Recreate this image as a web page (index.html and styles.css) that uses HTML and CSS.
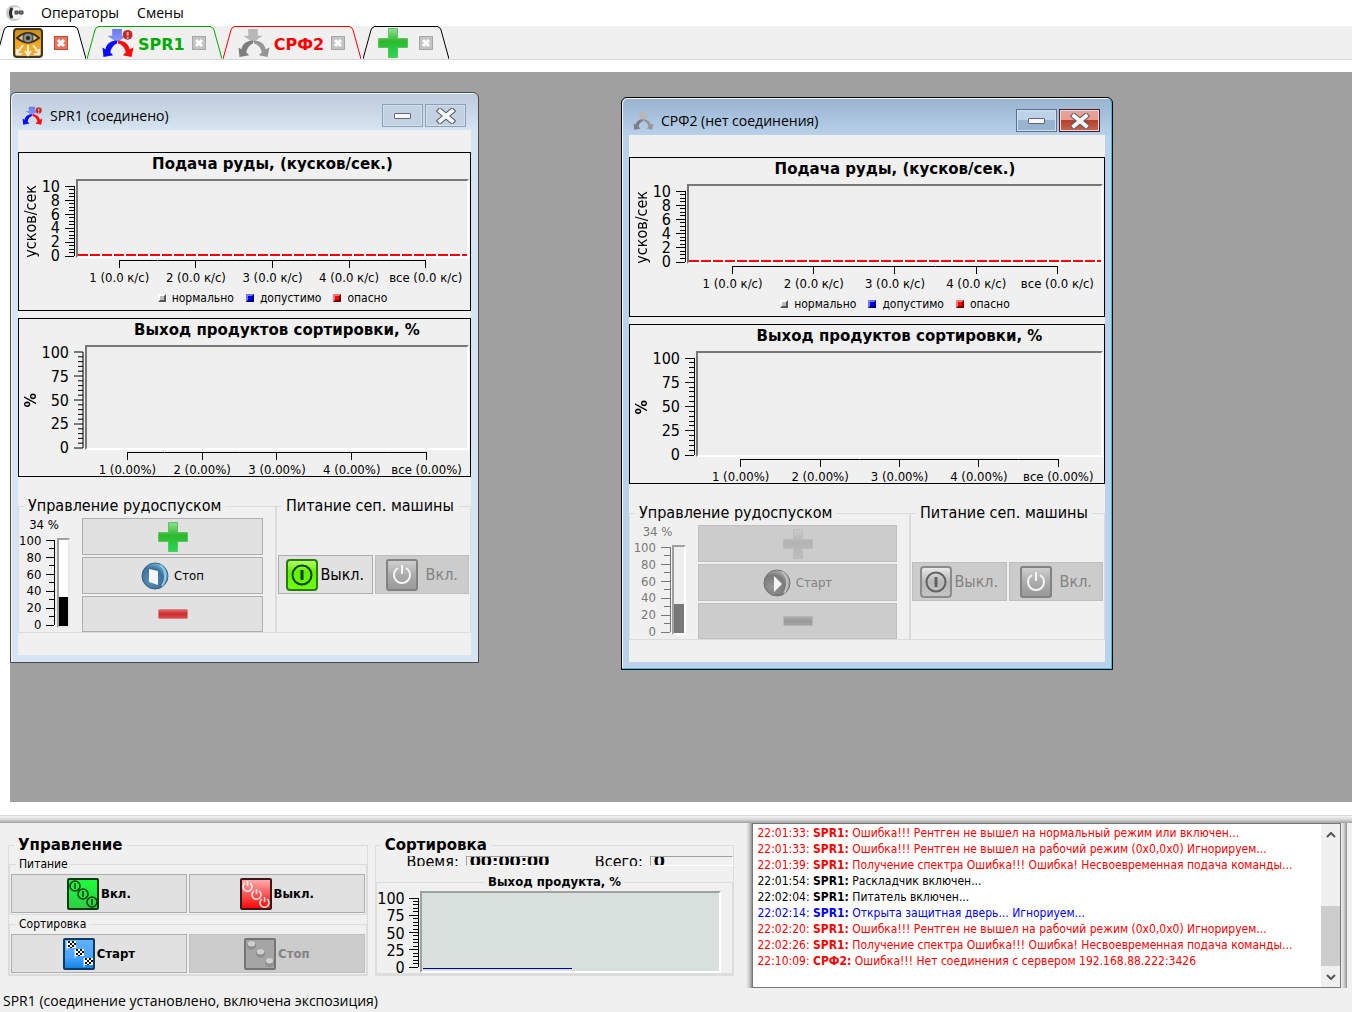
FILE: index.html
```html
<!DOCTYPE html>
<html lang="ru">
<head>
<meta charset="utf-8">
<title>SPR1</title>
<link rel="stylesheet" href="styles.css">
</head>
<body>
<svg class="defs" width="0" height="0" aria-hidden="true">
  <defs>
    <linearGradient id="gGold" x1="0" y1="0" x2="0" y2="1"><stop offset="0" stop-color="#c98a1c"/><stop offset=".5" stop-color="#f0a818"/><stop offset="1" stop-color="#e8b04a"/></linearGradient>
    <linearGradient id="gGreen" x1="0" y1="0" x2="0" y2="1"><stop offset="0" stop-color="#8fe08f"/><stop offset=".45" stop-color="#2db82d"/><stop offset="1" stop-color="#22dd55"/></linearGradient>
    <linearGradient id="gLime" x1="0" y1="0" x2="0" y2="1"><stop offset="0" stop-color="#b8ff70"/><stop offset=".4" stop-color="#60f000"/><stop offset="1" stop-color="#6cff10"/></linearGradient>
    <linearGradient id="gGray" x1="0" y1="0" x2="0" y2="1"><stop offset="0" stop-color="#d4d4d4"/><stop offset=".5" stop-color="#a4a4a4"/><stop offset="1" stop-color="#8c8c8c"/></linearGradient>
    <linearGradient id="gPale" x1="0" y1="0" x2="0" y2="1"><stop offset="0" stop-color="#f4f4f4"/><stop offset=".5" stop-color="#b4b4b4"/><stop offset="1" stop-color="#c4c4c4"/></linearGradient>
    <linearGradient id="gRed" x1="0" y1="0" x2="0" y2="1"><stop offset="0" stop-color="#ffb0b0"/><stop offset="1" stop-color="#ff0000"/></linearGradient>
    <linearGradient id="gBlue" x1="0" y1="0" x2="0" y2="1"><stop offset="0" stop-color="#62b2ff"/><stop offset=".6" stop-color="#4aa4fa"/><stop offset="1" stop-color="#0a84e4"/></linearGradient>
    <linearGradient id="gOn" x1="0" y1="0" x2="0" y2="1"><stop offset="0" stop-color="#1cff3c"/><stop offset="1" stop-color="#30cc44"/></linearGradient>
    <linearGradient id="gMinus" x1="0" y1="0" x2="0" y2="1"><stop offset="0" stop-color="#e07070"/><stop offset=".5" stop-color="#cc2a2a"/><stop offset="1" stop-color="#dd5050"/></linearGradient>
    <radialGradient id="gDisc" cx=".35" cy=".65" r=".75"><stop offset="0" stop-color="#5f93b8"/><stop offset=".6" stop-color="#3d6f98"/><stop offset="1" stop-color="#7fd0f5"/></radialGradient>
    <linearGradient id="gArrow" x1="0" y1="0" x2="0" y2="1"><stop offset="0" stop-color="#6a78f0"/><stop offset="1" stop-color="#8a9cff"/></linearGradient>

    <symbol id="split" viewBox="0 0 34 32">
      <path d="M11 1h10v7h5l-10 7-10-7h5z" fill="url(#gArrow)"/>
      <path d="M16 13C9 13 5 17 4 22L1 20l1 10 10-2-3-3c1-5 4-8 7-9z" fill="#0b0bff"/>
      <path d="M17 13c7 0 11 4 12 9l4-2-2 10-9-2 3-3c-1-5-4-8-8-9z" fill="#ff0b0b"/>
    </symbol>
    <symbol id="split-gray" viewBox="0 0 34 32">
      <path d="M11 1h10v7h5l-10 7-10-7h5z" fill="#b8b8b8"/>
      <path d="M16 13C9 13 5 17 4 22L1 20l1 10 10-2-3-3c1-5 4-8 7-9z" fill="#7e7e7e"/>
      <path d="M17 13c7 0 11 4 12 9l4-2-2 10-9-2 3-3c-1-5-4-8-8-9z" fill="#969696"/>
    </symbol>
    <symbol id="alert" viewBox="0 0 34 32">
      <circle cx="27" cy="7" r="5" fill="#c22a2a"/><path d="M27 4v4M27 9v2" stroke="#f3a0a0" stroke-width="2"/>
    </symbol>
    <symbol id="cross" viewBox="0 0 14 14">
      <path d="M4 4l6 6M10 4l-6 6" stroke="#fff" stroke-width="3"/>
    </symbol>
    <symbol id="plus" viewBox="0 0 30 30">
      <path d="M10.500 .5h9v10h10v9h-10v10h-9v-10H.5v-9h10z" fill="url(#gGreen)" stroke="#5cc45c"/>
    </symbol>
    <symbol id="minus" viewBox="0 0 30 10">
      <rect x=".5" y=".5" width="29" height="9" rx="1" fill="url(#gMinus)" stroke="#d88080"/>
    </symbol>
    <symbol id="disc" viewBox="0 0 28 28">
      <circle cx="14" cy="14" r="13" fill="url(#gDisc)" stroke="#38607f"/>
      <path d="M19 3c6 4 7 14 2 21" fill="none" stroke="#8fc8e6" stroke-width="2"/>
    </symbol>
    <symbol id="on" viewBox="0 0 32 32">
      <rect x="1" y="1" width="30" height="30" rx="3" fill="url(#gLime)" stroke="#2a7a10" stroke-width="2"/>
      <circle cx="16" cy="16" r="9.500" fill="none" stroke="#0b3a00" stroke-width="2"/><path d="M16 11v10" stroke="#0b3a00" stroke-width="3"/>
    </symbol>
    <symbol id="on-gray" viewBox="0 0 32 32">
      <rect x="1" y="1" width="30" height="30" rx="3" fill="url(#gPale)" stroke="#7c7c7c" stroke-width="2"/>
      <circle cx="16" cy="16" r="9.500" fill="none" stroke="#484848" stroke-width="2"/><path d="M16 11v10" stroke="#484848" stroke-width="3"/>
    </symbol>
    <symbol id="off" viewBox="0 0 32 32">
      <rect x="1" y="1" width="30" height="30" rx="2" fill="url(#gGray)" stroke="#707070" stroke-width="2"/>
      <path d="M12 9a8 8 0 1 0 8 0M16 6v9" fill="none" stroke="#fff" stroke-width="2"/>
    </symbol>
    <symbol id="ball" viewBox="0 0 12 12"><circle cx="6" cy="6" r="5" fill="#808080"/><ellipse cx="6" cy="4" rx="4" ry="3" fill="#d0d0d0"/></symbol>
    <symbol id="flag" viewBox="0 0 10 9">
      <path d="M1 0v9" stroke="#d8e8ff"/><rect x="1" width="9" height="7" fill="#fff"/>
      <path d="M2 0h2v2H2zM6 0h2v2H6zM4 2h2v2H4zM8 2h2v2H8zM2 4h2v2H2zM6 4h2v2H6zM4 6h2v1H4z" fill="#111"/>
    </symbol>
    <symbol id="winx" viewBox="0 0 20 16">
      <path d="M4 3l12 10M16 3L4 13" stroke="#525a68" stroke-width="6" stroke-linecap="square"/>
      <path d="M4 3l12 10M16 3L4 13" stroke="#f6f6f6" stroke-width="4" stroke-linecap="square"/>
    </symbol>
  </defs>
</svg>

<nav class="menubar">
  <svg class="app-icon" viewBox="0 0 20 18"><circle cx="9" cy="9" r="8" fill="#c9c9c9"/><circle cx="11" cy="9" r="6" fill="#f6f6f6"/><path d="M7 4q-3 5 0 10" fill="none" stroke="#2a2a2a" stroke-width="3"/><path d="M10 7h3v3h-3zM14 7h4v3h-4z" fill="#777" stroke="#444"/></svg>
  <a href="#operators">Операторы</a>
  <a href="#shifts">Смены</a>
</nav>

<div class="tabs" role="tablist">
  <div class="tab tab-home" role="tab" aria-selected="true">
    <svg class="edge" viewBox="0 0 11 33"><path d="M0 33L8 4Q9 1 11 1V33z"/><path class="line" d="M0 33L8 4Q9 1 11 1"/></svg>
    <div class="face">
      <svg class="tab-icon" viewBox="0 0 30 30"><rect x="1" y="1" width="28" height="28" rx="3" fill="url(#gGold)" stroke="#3d3528" stroke-width="2"/><path d="M4 10Q15 0 26 10Q15 19 4 10z" fill="#e4c98c" stroke="#3a2f1a" stroke-width="2"/><circle cx="15" cy="10" r="5" fill="#8a8a8a" stroke="#333"/><circle cx="15" cy="10" r="2" fill="#222"/><path d="M15 17v9M12 23l3 4 3-4M10 17l-5 7M4 21v5h5M20 17l5 7M26 21v5h-5" fill="none" stroke="#f1ead8" stroke-width="2"/></svg>
      <button class="tab-close hot" aria-label="Закрыть"><svg><use href="#cross"/></svg></button>
    </div>
    <svg class="edge" viewBox="0 0 11 33"><path d="M0 1Q2 1 3 4L11 33H0z"/><path class="line" d="M0 1Q2 1 3 4L11 33"/></svg>
  </div>
  <div class="tab tab-spr" role="tab">
    <svg class="edge" viewBox="0 0 11 33"><path d="M0 33L8 4Q9 1 11 1V33z"/><path class="line" d="M0 33L8 4Q9 1 11 1"/></svg>
    <div class="face">
      <svg class="tab-icon wide" viewBox="0 0 34 32"><use href="#split"/><use href="#alert"/></svg>
      <span>SPR1</span>
      <button class="tab-close" aria-label="Закрыть"><svg><use href="#cross"/></svg></button>
    </div>
    <svg class="edge" viewBox="0 0 11 33"><path d="M0 1Q2 1 3 4L11 33H0z"/><path class="line" d="M0 1Q2 1 3 4L11 33"/></svg>
  </div>
  <div class="tab tab-srf" role="tab">
    <svg class="edge" viewBox="0 0 11 33"><path d="M0 33L8 4Q9 1 11 1V33z"/><path class="line" d="M0 33L8 4Q9 1 11 1"/></svg>
    <div class="face">
      <svg class="tab-icon wide" viewBox="0 0 34 32"><use href="#split-gray"/></svg>
      <span>СРФ2</span>
      <button class="tab-close" aria-label="Закрыть"><svg><use href="#cross"/></svg></button>
    </div>
    <svg class="edge" viewBox="0 0 11 33"><path d="M0 1Q2 1 3 4L11 33H0z"/><path class="line" d="M0 1Q2 1 3 4L11 33"/></svg>
  </div>
  <div class="tab tab-add" role="tab">
    <svg class="edge" viewBox="0 0 11 33"><path d="M0 33L8 4Q9 1 11 1V33z"/><path class="line" d="M0 33L8 4Q9 1 11 1"/></svg>
    <div class="face">
      <svg class="tab-icon"><use href="#plus"/></svg>
      <button class="tab-close" aria-label="Закрыть"><svg><use href="#cross"/></svg></button>
    </div>
    <svg class="edge" viewBox="0 0 11 33"><path d="M0 1Q2 1 3 4L11 33H0z"/><path class="line" d="M0 1Q2 1 3 4L11 33"/></svg>
  </div>
</div>

<main class="desktop">
  <section class="window win-spr">
    <header class="titlebar">
      <svg class="win-icon" viewBox="0 0 34 32"><use href="#split"/><use href="#alert"/></svg>
      <h2>SPR1 (соединено)</h2>
      <button class="win-btn" aria-label="Свернуть"><span class="bar"></span></button>
      <button class="win-btn" aria-label="Закрыть"><svg><use href="#winx"/></svg></button>
    </header>
    <div class="client">
      <div class="chart feed">
        <h3>Подача руды, (кусков/сек.)</h3>
        <div class="ylabel"><span>усков/сек</span></div>
        <ol class="ynums"><li>10</li><li>8</li><li>6</li><li>4</li><li>2</li><li>0</li></ol>
        <svg class="yticks" viewBox="0 0 9 100" preserveAspectRatio="none"><path d="M9 0V100M0 0H9M0 20H9M0 40H9M0 60H9M0 80H9M0 100H9M4 5H9M4 10H9M4 15H9M4 25H9M4 30H9M4 35H9M4 45H9M4 50H9M4 55H9M4 65H9M4 70H9M4 75H9M4 85H9M4 90H9M4 95H9"/></svg>
        <div class="plot"></div>
        <ol class="xaxis"><li>1 (0.0 к/с)</li><li>2 (0.0 к/с)</li><li>3 (0.0 к/с)</li><li>4 (0.0 к/с)</li><li>все (0.0 к/с)</li></ol>
        <ul class="key"><li class="k-norm">нормально</li><li class="k-ok">допустимо</li><li class="k-bad">опасно</li></ul>
      </div>
      <div class="chart yield">
        <h3>Выход продуктов сортировки, %</h3>
        <div class="ylabel"><span>%</span></div>
        <ol class="ynums"><li>100</li><li>75</li><li>50</li><li>25</li><li>0</li></ol>
        <svg class="yticks" viewBox="0 0 9 100" preserveAspectRatio="none"><path d="M9 0V100M0 0H9M0 25H9M0 50H9M0 75H9M0 100H9M4 5H9M4 10H9M4 15H9M4 20H9M4 30H9M4 35H9M4 40H9M4 45H9M4 55H9M4 60H9M4 65H9M4 70H9M4 80H9M4 85H9M4 90H9M4 95H9"/></svg>
        <div class="plot"></div>
        <ol class="xaxis"><li>1 (0.00%)</li><li>2 (0.00%)</li><li>3 (0.00%)</li><li>4 (0.00%)</li><li>все (0.00%)</li></ol>
      </div>
      <div class="controls">
        <fieldset class="chute">
          <legend>Управление рудоспуском</legend>
          <div class="chute-row">
            <div class="gauge">
              <div class="pct">34 %</div>
              <div class="scale">
                <ol><li>100</li><li>80</li><li>60</li><li>40</li><li>20</li><li>0</li></ol>
                <svg class="yticks" viewBox="0 0 9 100" preserveAspectRatio="none"><path d="M9 0V100M0 0H9M0 20H9M0 40H9M0 60H9M0 80H9M0 100H9M3 10H9M3 30H9M3 50H9M3 70H9M3 90H9"/></svg>
                <div class="level"><div class="fill" style="height:34%"></div></div>
              </div>
            </div>
            <div class="chute-btns">
              <button aria-label="Увеличить"><svg class="i-plus"><use href="#plus"/></svg></button>
              <button><svg class="i-disc" viewBox="0 0 28 28"><use href="#disc"/><path d="M8 7l9 2v14l-9-3z" fill="#f2f6fa"/></svg>Стоп</button>
              <button aria-label="Уменьшить"><svg class="i-minus"><use href="#minus"/></svg></button>
            </div>
          </div>
        </fieldset>
        <fieldset class="power">
          <legend>Питание сеп. машины</legend>
          <div class="power-row">
            <button><svg><use href="#on"/></svg>Выкл.</button>
            <button class="second" disabled><svg><use href="#off"/></svg>Вкл.</button>
          </div>
        </fieldset>
      </div>
    </div>
  </section>

  <section class="window win-srf active">
    <header class="titlebar">
      <svg class="win-icon" viewBox="0 0 34 32"><use href="#split-gray"/></svg>
      <h2>СРФ2 (нет соединения)</h2>
      <button class="win-btn" aria-label="Свернуть"><span class="bar"></span></button>
      <button class="win-btn close" aria-label="Закрыть"><svg><use href="#winx"/></svg></button>
    </header>
    <div class="client">
      <div class="chart feed">
        <h3>Подача руды, (кусков/сек.)</h3>
        <div class="ylabel"><span>усков/сек</span></div>
        <ol class="ynums"><li>10</li><li>8</li><li>6</li><li>4</li><li>2</li><li>0</li></ol>
        <svg class="yticks" viewBox="0 0 9 100" preserveAspectRatio="none"><path d="M9 0V100M0 0H9M0 20H9M0 40H9M0 60H9M0 80H9M0 100H9M4 5H9M4 10H9M4 15H9M4 25H9M4 30H9M4 35H9M4 45H9M4 50H9M4 55H9M4 65H9M4 70H9M4 75H9M4 85H9M4 90H9M4 95H9"/></svg>
        <div class="plot"></div>
        <ol class="xaxis"><li>1 (0.0 к/с)</li><li>2 (0.0 к/с)</li><li>3 (0.0 к/с)</li><li>4 (0.0 к/с)</li><li>все (0.0 к/с)</li></ol>
        <ul class="key"><li class="k-norm">нормально</li><li class="k-ok">допустимо</li><li class="k-bad">опасно</li></ul>
      </div>
      <div class="chart yield">
        <h3>Выход продуктов сортировки, %</h3>
        <div class="ylabel"><span>%</span></div>
        <ol class="ynums"><li>100</li><li>75</li><li>50</li><li>25</li><li>0</li></ol>
        <svg class="yticks" viewBox="0 0 9 100" preserveAspectRatio="none"><path d="M9 0V100M0 0H9M0 25H9M0 50H9M0 75H9M0 100H9M4 5H9M4 10H9M4 15H9M4 20H9M4 30H9M4 35H9M4 40H9M4 45H9M4 55H9M4 60H9M4 65H9M4 70H9M4 80H9M4 85H9M4 90H9M4 95H9"/></svg>
        <div class="plot"></div>
        <ol class="xaxis"><li>1 (0.00%)</li><li>2 (0.00%)</li><li>3 (0.00%)</li><li>4 (0.00%)</li><li>все (0.00%)</li></ol>
      </div>
      <div class="controls">
        <fieldset class="chute off">
          <legend>Управление рудоспуском</legend>
          <div class="chute-row">
            <div class="gauge">
              <div class="pct">34 %</div>
              <div class="scale">
                <ol><li>100</li><li>80</li><li>60</li><li>40</li><li>20</li><li>0</li></ol>
                <svg class="yticks" viewBox="0 0 9 100" preserveAspectRatio="none"><path d="M9 0V100M0 0H9M0 20H9M0 40H9M0 60H9M0 80H9M0 100H9M3 10H9M3 30H9M3 50H9M3 70H9M3 90H9"/></svg>
                <div class="level"><div class="fill" style="height:34%"></div></div>
              </div>
            </div>
            <div class="chute-btns">
              <button disabled aria-label="Увеличить"><svg class="i-plus"><use href="#plus"/></svg></button>
              <button disabled><svg class="i-disc" viewBox="0 0 28 28"><use href="#disc"/><path d="M11 7l8 8-8 8z" fill="#fff"/></svg>Старт</button>
              <button disabled aria-label="Уменьшить"><svg class="i-minus"><use href="#minus"/></svg></button>
            </div>
          </div>
        </fieldset>
        <fieldset class="power">
          <legend>Питание сеп. машины</legend>
          <div class="power-row">
            <button disabled><svg><use href="#on-gray"/></svg>Выкл.</button>
            <button class="second" disabled><svg><use href="#off"/></svg>Вкл.</button>
          </div>
        </fieldset>
      </div>
    </div>
  </section>
</main>

<div class="splitter"></div>

<section class="dock">
  <fieldset class="panel">
    <legend class="head">Управление</legend>
    <fieldset class="pair">
      <legend>Питание</legend>
      <div class="pair-row">
        <button><svg viewBox="0 0 32 32"><rect x="1" y="1" width="30" height="30" rx="1" fill="url(#gOn)" stroke="#0a3a10" stroke-width="2"/><g fill="none" stroke="#053a0a" stroke-width="1.500"><circle cx="8" cy="8" r="5"/><path d="M8 5v6"/><circle cx="16" cy="16" r="5"/><path d="M16 13v6"/><circle cx="25" cy="24" r="5"/><path d="M25 21v6"/></g></svg>Вкл.</button>
        <button><svg viewBox="0 0 32 32"><rect x="1" y="1" width="30" height="30" rx="1" fill="url(#gRed)" stroke="#3c1818" stroke-width="2"/><g fill="none" stroke="#fff" stroke-opacity=".9" stroke-width="1.500"><path d="M5 5a4.500 4.500 0 1 0 5 0M7.500 3v5M14 13a4.500 4.500 0 1 0 5 0M16.500 11v5M22 21a4.500 4.500 0 1 0 5 0M24.500 19v5"/></g></svg>Выкл.</button>
      </div>
    </fieldset>
    <fieldset class="pair">
      <legend>Сортировка</legend>
      <div class="pair-row">
        <button><svg viewBox="0 0 32 32"><rect x="1" y="1" width="30" height="30" rx="1" fill="url(#gBlue)" stroke="#123a60" stroke-width="2"/><use href="#flag" x="3" y="3" width="10" height="9"/><use href="#flag" x="11" y="11" width="10" height="9"/><use href="#flag" x="20" y="20" width="10" height="9"/></svg>Старт</button>
        <button disabled><svg viewBox="0 0 32 32"><rect x="1" y="1" width="30" height="30" rx="1" fill="#9c9c9c" stroke="#606060" stroke-width="2"/><use href="#ball" x="2" y="2" width="11" height="11"/><use href="#ball" x="11" y="10" width="11" height="11"/><use href="#ball" x="20" y="19" width="11" height="11"/></svg>Стоп</button>
      </div>
    </fieldset>
  </fieldset>

  <fieldset class="panel">
    <legend class="head">Сортировка</legend>
    <div class="counters">
      <label for="time">Время:</label><output id="time">00:00:00</output>
      <label for="total">Всего:</label><output id="total">0</output>
    </div>
    <fieldset class="product">
      <legend>Выход продукта, %</legend>
      <div class="product-row">
        <ol class="ynums"><li>100</li><li>75</li><li>50</li><li>25</li><li>0</li></ol>
        <svg class="yticks" viewBox="0 0 9 100" preserveAspectRatio="none"><path d="M9 0V100M0 0H9M0 25H9M0 50H9M0 75H9M0 100H9M4 5H9M4 10H9M4 15H9M4 20H9M4 30H9M4 35H9M4 40H9M4 45H9M4 55H9M4 60H9M4 65H9M4 70H9M4 80H9M4 85H9M4 90H9M4 95H9"/></svg>
        <div class="product-plot"><div class="trace"></div></div>
      </div>
    </fieldset>
  </fieldset>

  <div class="vsplit first"></div>
  <div class="log">
    <ul>
      <li class="err">22:01:33: <b>SPR1:</b> Ошибка!!! Рентген не вышел на нормальный режим или включен...</li>
      <li class="err">22:01:33: <b>SPR1:</b> Ошибка!!! Рентген не вышел на рабочий режим (0x0,0x0) Игнорируем...</li>
      <li class="err">22:01:39: <b>SPR1:</b> Получение спектра Ошибка!!! Ошибка! Несвоевременная подача команды...</li>
      <li>22:01:54: <b>SPR1:</b> Раскладчик включен...</li>
      <li>22:02:04: <b>SPR1:</b> Питатель включен...</li>
      <li class="info">22:02:14: <b>SPR1:</b> Открыта защитная дверь... Игнориуем...</li>
      <li class="err">22:02:20: <b>SPR1:</b> Ошибка!!! Рентген не вышел на рабочий режим (0x0,0x0) Игнорируем...</li>
      <li class="err">22:02:26: <b>SPR1:</b> Получение спектра Ошибка!!! Ошибка! Несвоевременная подача команды...</li>
      <li class="err">22:10:09: <b>СРФ2:</b> Ошибка!!! Нет соединения с сервером 192.168.88.222:3426</li>
    </ul>
    <div class="scrollbar">
      <button aria-label="Вверх"><svg viewBox="0 0 10 6"><path d="M1 5l4-4 4 4"/></svg></button>
      <div class="thumb"></div>
      <button aria-label="Вниз"><svg viewBox="0 0 10 6"><path d="M1 1l4 4 4-4"/></svg></button>
    </div>
  </div>
  <div class="vsplit last"></div>
</section>

<footer class="status">SPR1 (соединение установлено, включена экспозиция)</footer>
</body>
</html>
```
FILE: styles.css
```css
*, *::before { box-sizing: border-box; }

:root {
  --ui: "Open Sans", "Noto Sans", sans-serif;
  --form: "DejaVu Sans Condensed", "Noto Sans", sans-serif;
  --bold: "DejaVu Sans", "Noto Sans", sans-serif;
  --face: #f0f0f0;
  --line: #dcdcdc;
}

body {
  margin: 0;
  min-height: 100vh;
  display: flex;
  flex-direction: column;
  background: #fff;
  color: #000;
  font: 12px/16px var(--form);
}

h2, h3, ol, ul, fieldset, legend { margin: 0; padding: 0; }
ol, ul { list-style: none; }
fieldset { min-width: 0; border: 1px solid var(--line); }
.defs { position: absolute; }

button {
  margin: 0;
  padding: 0;
  display: flex;
  align-items: center;
  justify-content: center;
  font: inherit;
  color: #000;
  background: #e1e1e1;
  border: 1px solid #adadad;
}
button:disabled { background: #ccc; border-color: #bfbfbf; color: #838383; }
button:disabled svg { filter: grayscale(1); opacity: .8; }
button:disabled .i-plus, button:disabled .i-minus { opacity: .4; }

/* menu */
.menubar {
  display: flex;
  align-items: center;
  gap: 16px;
  height: 26px;
  padding-left: 5px;
  font: 14px/26px var(--ui);
}
.menubar a { padding-right: 2px; color: #000; text-decoration: none; }
.app-icon { width: 20px; height: 18px; }

/* tabs */
.tabs {
  display: flex;
  height: 34px;
  background: var(--face);
  border-bottom: 1px solid #d9d9d9;
  overflow: hidden;
}
.tab { display: flex; color: #000; margin-right: 1px; }
.tab-home { margin-left: -4px; }
.edge { width: 11px; height: 33px; fill: var(--face); }
.edge .line { fill: none; stroke: currentColor; }
.tab-home .edge { fill: #fff; }
.tab-home .face { background: #fff; }
.face {
  display: flex;
  align-items: center;
  gap: 3px;
  height: 33px;
  border-top: 1px solid currentColor;
  font: bold 16px/20px var(--bold);
}
.face span { padding-top: 4px; }
.tab-icon { width: 30px; height: 30px; }
.tab-icon.wide { width: 34px; height: 31px; }
.tab-close {
  width: 14px;
  height: 14px;
  margin: 0 5px 0 4px;
  background: #c4c4c4;
  border-color: #a6a6a6;
}
.tab-close svg { width: 14px; height: 14px; flex: none; }
.tab-close.hot { background: #e07860; border-color: #c84a30; }
.tab-home .tab-close { margin: 0 7px 0 8px; }
.tab-home .face { padding-left: 6px; }
.tab-spr { color: #00aa00; }
.tab-srf { color: #ff0000; margin-right: 2px; }
.tab-spr .face { padding-left: 3px; }
.tab-srf .face { padding-left: 3px; }
.tab-add .face { padding-left: 4px; }
.tab-add .tab-close { margin-left: 8px; }

/* window area */
.desktop {
  position: relative;
  flex: 1;
  min-height: 730px;
  margin: 12px 0 13px 10px;
  background: #a0a0a0;
}
.window {
  position: absolute;
  display: flex;
  flex-direction: column;
  padding: 0 7px 7px;
  border: 1px solid #4a4a4a;
  border-radius: 6px 6px 0 0;
  background: linear-gradient(#bdcbda, #d7e4f2 38px);
  box-shadow: inset 1px 1px #eef4fa;
}
.window.active {
  border-color: #000;
  background: linear-gradient(#98b3d0, #b9d1ea 38px);
  box-shadow: inset -1px -1px #2fc4dc, inset 1px 1px #f4f8fc;
}
.win-spr { left: 0; top: 20px; width: 469px; height: 571px; }
.win-srf { left: 611px; top: 25px; width: 492px; height: 573px; }
.titlebar { flex: none; display: flex; align-items: center; height: 37px; padding: 8px 5px 0 4px; }
.win-icon { width: 21px; height: 20px; margin-right: 7px; }
.titlebar h2 { flex: 1; font: 14px/20px var(--ui); white-space: nowrap; }
.win-btn {
  width: 41px;
  height: 23px;
  margin-left: 2px;
  background: #c3d2e2;
  border: 1px solid #8e9fb8;
  box-shadow: inset 0 0 0 1px #d3dfeb;
}
.active .win-btn { background: linear-gradient(#bdd2e8 50%, #97b3d0 50%); border-color: #5c7290; }
.active .win-btn.close { background: linear-gradient(#e8a093 45%, #b8402c 50%, #c86450); border-color: #5a1a1a; }
.win-btn .bar { width: 17px; height: 6px; background: #f6f6f6; border: 1px solid #606878; border-radius: 1px; }
.win-btn svg { width: 20px; height: 16px; }
.client {
  flex: 1;
  min-height: 0;
  display: flex;
  flex-direction: column;
  gap: 7px;
  padding: 22px 0;
  background: var(--face);
}

/* charts */
.chart {
  flex: 1 1 0;
  display: grid;
  min-height: 0;
  padding-right: 1px;
  border: 1px solid #000;
  overflow: hidden;
}
.feed { grid-template: 26px minmax(0, 1fr) 32px 20px / 21px 20px 5px 9px 2px minmax(0, 1fr); }
.yield { grid-template: 26px minmax(0, 1fr) 26px / 21px 29px 5px 9px 2px minmax(0, 1fr); }
.chart h3 {
  grid-area: 1 / 6;
  font: bold 15px/22px var(--bold);
  text-align: center;
  white-space: nowrap;
}
.ylabel {
  grid-area: 2 / 1;
  display: flex;
  align-items: center;
  justify-content: center;
  margin: 6px 0 0 3px;
  overflow: hidden;
  font-size: 16px;
}
.yield .ylabel { font-weight: bold; }
.ylabel span { writing-mode: vertical-rl; rotate: 180deg; line-height: 18px; white-space: nowrap; }
.ynums {
  grid-area: 2 / 2;
  display: flex;
  flex-direction: column;
  justify-content: space-between;
  margin: 2px 0 -4px;
  font-size: 16px;
  line-height: 12px;
  text-align: right;
}
.yticks {
  grid-area: 2 / 4;
  width: 9px;
  height: calc(100% - 9px);
  margin-top: 7px;
  fill: none;
  stroke: #000;
  shape-rendering: crispEdges;
  overflow: visible;
}
.yticks path { vector-effect: non-scaling-stroke; }
.plot {
  grid-area: 2 / 6;
  background: #eee;
  border: 2px solid #777;
  border-right-color: #fff;
  border-bottom-color: #fff;
}
.feed .plot {
  background: repeating-linear-gradient(90deg, #f00 0 10px, #fff 10px 12px) bottom / 100% 2px no-repeat #eee;
}
.xaxis {
  grid-area: 3 / 6;
  display: grid;
  grid-template-columns: repeat(5, minmax(0, 1fr));
  margin-top: 2px;
  padding: 0 5px;
  font-size: 13px;
}
.xaxis li { display: flex; flex-direction: column; align-items: center; white-space: nowrap; }
.xaxis li::before {
  content: "";
  align-self: stretch;
  height: 8px;
  margin-bottom: 2px;
  background: linear-gradient(#000, #000) center / 1px 8px no-repeat, linear-gradient(#000, #000) top / 100% 1px no-repeat;
}
.xaxis li:first-child::before { background-position: center, right top; background-size: 1px 8px, 50% 1px; }
.xaxis li:last-child::before { background-position: center, left top; background-size: 1px 8px, 50% 1px; }
.key { grid-area: 4 / 6; display: flex; align-items: start; justify-content: center; gap: 12px; }
.key li { display: flex; align-items: center; gap: 6px; }
.key li::before { content: ""; width: 8px; height: 8px; border: 2px solid; }
.key .k-norm::before { background: #bbb; border-color: #fff #555 #555 #fff; }
.key .k-ok::before { background: #00f; border-color: #77f #007 #007 #77f; }
.key .k-bad::before { background: #f00; border-color: #f77 #700 #700 #f77; }

/* window controls */
.controls { flex: none; display: flex; height: 138px; margin-top: 11px; }
.controls legend { margin-left: 5px; padding: 0 4px; font-size: 16px; line-height: 22px; white-space: nowrap; }
.chute { flex: 1; }
.chute-row { display: flex; height: 115px; padding-right: 12px; }
.gauge { width: 63px; padding-right: 12px; font-size: 13px; }
.win-srf .gauge { width: 68px; }
.pct { padding-right: 1px; text-align: center; }
.scale { display: flex; justify-content: flex-end; height: 100px; }
.scale ol { display: flex; flex-direction: column; justify-content: space-between; margin-right: 5px; text-align: right; }
.scale .yticks { height: 85px; margin-top: 7px; }
.level {
  display: flex;
  flex-direction: column;
  justify-content: flex-end;
  width: 14px;
  height: 90px;
  margin: 5px 0 0 2px;
  background: #fff;
  border: 2px solid #a0a0a0;
  border-right-color: #e8e8e8;
  border-bottom-color: #e8e8e8;
}
.fill { background: #000; }
.off .gauge { color: #787878; }
.off .yticks { stroke: #787878; }
.off .level { background: #eee; border-right-color: #fff; border-bottom-color: #fff; }
.off .fill { background: #787878; }
.chute-btns { flex: 1; display: grid; grid-template-rows: 37px 37px 36px; gap: 2px; padding-top: 1px; }
.chute-btns button { gap: 5px; font-size: 13px; }
.i-plus { width: 30px; height: 30px; }
.i-minus { width: 30px; height: 10px; }
.i-disc { width: 28px; height: 28px; }
.power { width: 195px; }
.power-row { display: grid; grid-template-columns: 1fr 1fr; gap: 2px; padding: 38px 1px; }
.power-row button { height: 39px; gap: 2px; font-size: 16px; }
.power-row .second { gap: 8px; }
.power-row svg { width: 32px; height: 32px; }

/* bottom dock */
.splitter { height: 8px; border-top: 1px solid #dcdcdc; background: linear-gradient(#f4f4f4, #d8d8d8 50%, #a0a0a0); }
.dock { display: flex; height: 165px; background: var(--face); padding-left: 8px; }
.panel { flex: 1 1 360px; height: 142px; margin: 11px 7px 0 0; border-width: 1px 1px 2px; }
.head { margin-left: 5px; padding: 0 4px; font: bold 15px/22px var(--bold); }
.pair { height: 59px; margin-bottom: 1px; }
.pair legend { margin-left: 6px; padding: 0 3px; }
.pair-row { display: grid; grid-template-columns: 1fr 1fr; gap: 2px; padding: 2px 1px 1px; }
.pair-row button { height: 39px; gap: 2px; font-size: 13px; font-weight: bold; }
.pair-row svg { width: 32px; height: 32px; }
.counters {
  display: grid;
  grid-template-columns: 83px 84px 86px 1fr;
  column-gap: 7px;
  height: 10px;
  overflow: hidden;
  font-size: 16px;
  line-height: 11px;
}
.counters label { text-align: right; }
.counters output {
  height: 10px;
  padding-left: 3px;
  border: 1px solid #a0a0a0;
  border-right-color: #fff;
  border-bottom-color: #fff;
  font: bold 16px/10px var(--bold);
  overflow: hidden;
}
.product { height: 100px; margin-top: 8px; }
.product legend { margin: 0 auto; padding: 0 3px; font-size: 13px; font-weight: bold; }
.product-row { display: flex; height: 83px; padding: 1px 11px 0 0; }
.product .ynums { width: 28px; margin: 2px 4px -1px 0; }
.product .yticks { height: 69px; }
.product-plot {
  flex: 1;
  display: flex;
  align-items: flex-end;
  margin-left: 2px;
  background: #d8e0de;
  border: 2px solid #a0a0a0;
  border-right-color: #fff;
  border-bottom-color: #fff;
}
.trace { width: 50%; height: 1px; margin: 0 0 2px 1px; background: #0000a8; }
.vsplit { width: 6px; background: linear-gradient(90deg, #f0f0f0, #d0d0d0 50%, #909090); }
.vsplit.first { margin-left: 5px; }
.vsplit.last { margin-right: 5px; }
.log { flex: 0 1 589px; display: flex; background: #fff; border: 1px solid #777; }
.log ul { flex: 1; min-width: 0; padding: 1px 0 0 4px; overflow: hidden; white-space: nowrap; }
.err { color: #f00; }
.info { color: #00f; }
.scrollbar { display: flex; flex-direction: column; width: 19px; background: var(--face); }
.scrollbar button { height: 21px; background: none; border: 0; }
.scrollbar svg { width: 10px; height: 6px; fill: none; stroke: #555; stroke-width: 2; }
.thumb { height: 60px; margin-top: auto; background: #cdcdcd; }

.status { height: 24px; padding-left: 3px; background: var(--face); font: 14px/26px var(--ui); }
```
